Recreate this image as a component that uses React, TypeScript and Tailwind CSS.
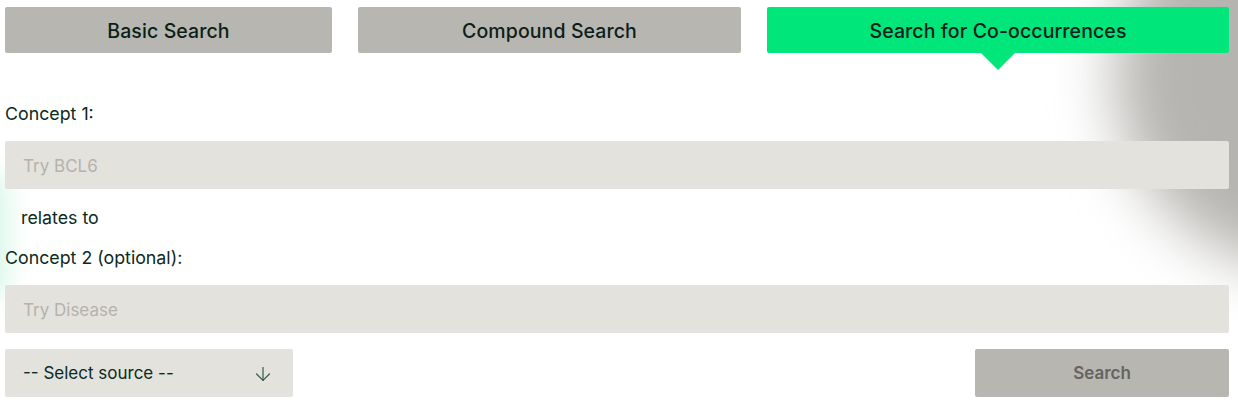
import React from 'react';
import { ArrowDown } from 'lucide-react';

const tabs = [
  { label: 'Basic Search', w: 'w-[327px]', active: false },
  { label: 'Compound Search', w: 'w-[383px]', active: false },
  { label: 'Search for Co-occurrences', w: 'w-[462px]', active: true },
];

export default function App() {
  return (
    <div className="relative w-[1238px] h-[404px] overflow-hidden bg-white font-['Inter',sans-serif] text-[#0b2a22]">
      {/* blurred background blobs */}
      <div className="absolute left-[1115px] top-[-120px] w-[390px] h-[390px] rounded-full bg-[#b6b4b0] blur-[30px]" />
      <div className="absolute left-[-34px] top-[170px] w-[44px] h-[130px] rounded-full bg-[#dcf8ea] blur-[12px]" />

      <div className="relative pl-[5px] pt-[7px] w-[1229px]">
        <div className="flex gap-[26px]">
          {tabs.map((t) => (
            <div key={t.label} className={`relative ${t.w}`}>
              <button
                className={`w-full h-[46px] pt-[3px] rounded-[2px] text-[19.5px] font-medium tracking-[0.1px] ${
                  t.active ? 'bg-[#00e67a] text-[#0b1f1a]' : 'bg-[#b8b6b1] text-[#0b1f1a]'
                }`}
              >
                {t.label}
              </button>
              {t.active && (
                <div className="absolute left-1/2 top-[46px] -translate-x-1/2 w-0 h-0 border-l-[17px] border-r-[17px] border-t-[17px] border-l-transparent border-r-transparent border-t-[#00e67a]" />
              )}
            </div>
          ))}
        </div>

        <div className="mt-[49px] text-[17.8px] leading-[24px]">Concept 1:</div>
        <input
          className="mt-[15px] block w-full h-[48px] rounded-[2px] bg-[#e4e2dd] px-[18px] pt-[2px] text-[17px] placeholder:text-[#b4b2ad] outline-none"
          placeholder="Try BCL6"
        />
        <div className="mt-[17px] pl-[16px] text-[17.8px] leading-[24px]">relates to</div>
        <div className="mt-[16px] text-[17.8px] leading-[24px]">Concept 2 (optional):</div>
        <input
          className="mt-[15px] block w-full h-[48px] rounded-[2px] bg-[#e4e2dd] px-[18px] pt-[2px] text-[17px] placeholder:text-[#b4b2ad] outline-none"
          placeholder="Try Disease"
        />

        <div className="mt-[16px] flex justify-between">
          <div className="w-[288px] h-[48px] pt-[2px] rounded-[2px] bg-[#e4e2dd] flex items-center justify-between pl-[18px] pr-[19px] text-[17px]">
            <span>-- Select source --</span>
            <ArrowDown size={22} strokeWidth={1.3} className="text-[#2f5a4c]" />
          </div>
          <button className="w-[254px] h-[48px] pt-[2px] rounded-[2px] bg-[#b8b6b1] text-[17px] font-semibold text-[#646461]">
            Search
          </button>
        </div>
      </div>
    </div>
  );
}
